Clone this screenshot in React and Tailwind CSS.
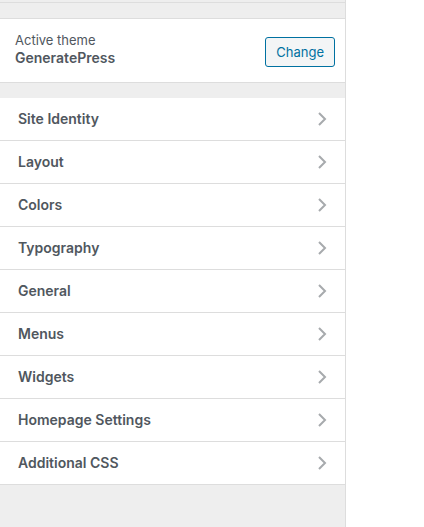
import React from "react";

const items = [
  "Site Identity",
  "Layout",
  "Colors",
  "Typography",
  "General",
  "Menus",
  "Widgets",
  "Homepage Settings",
  "Additional CSS",
];

function Chevron() {
  return (
    <svg width="10" height="16" viewBox="0 0 10 16" className="shrink-0">
      <path d="M2 2 L8 8 L2 14" fill="none" stroke="#a7aaad" strokeWidth="2" />
    </svg>
  );
}

export default function App() {
  return (
    <div
      className="w-[424px] h-[527px] bg-white flex"
      style={{ fontFamily: "Inter, 'Noto Sans', sans-serif" }}
    >
      <div className="w-[346px] h-full bg-[#eeeeee] border-r border-[#dddddd] flex flex-col">
        <div className="h-[2px]" />
        <div className="h-[16px] border-t border-[#dddddd]" />
        <div className="h-[65px] bg-white border-y border-[#dddddd] flex items-center justify-between pl-[15px] pr-[10px]">
          <div className="flex flex-col mb-[3px]">
            <span className="text-[13px] leading-[18px] text-[#50575e]">Active theme</span>
            <span className="text-[14px] leading-[18px] font-semibold text-[#50575e]">GeneratePress</span>
          </div>
          <button className="h-[30px] mt-[2px] px-[10px] rounded-[3px] border border-[#0071a1] bg-[#f3f5f6] text-[#0071a1] text-[13px] pt-[2px]">
            Change
          </button>
        </div>
        <div className="h-[15px]" />
        <div className="flex flex-col">
          {items.map((t) => (
            <div
              key={t}
              className="h-[43px] bg-white border-b border-[#dddddd] flex items-center justify-between pl-[18px] pr-[18px]"
            >
              <span className="text-[14px] leading-[20px] font-semibold text-[#50575e] mb-[1px]">{t}</span>
              <Chevron />
            </div>
          ))}
        </div>
      </div>
    </div>
  );
}
